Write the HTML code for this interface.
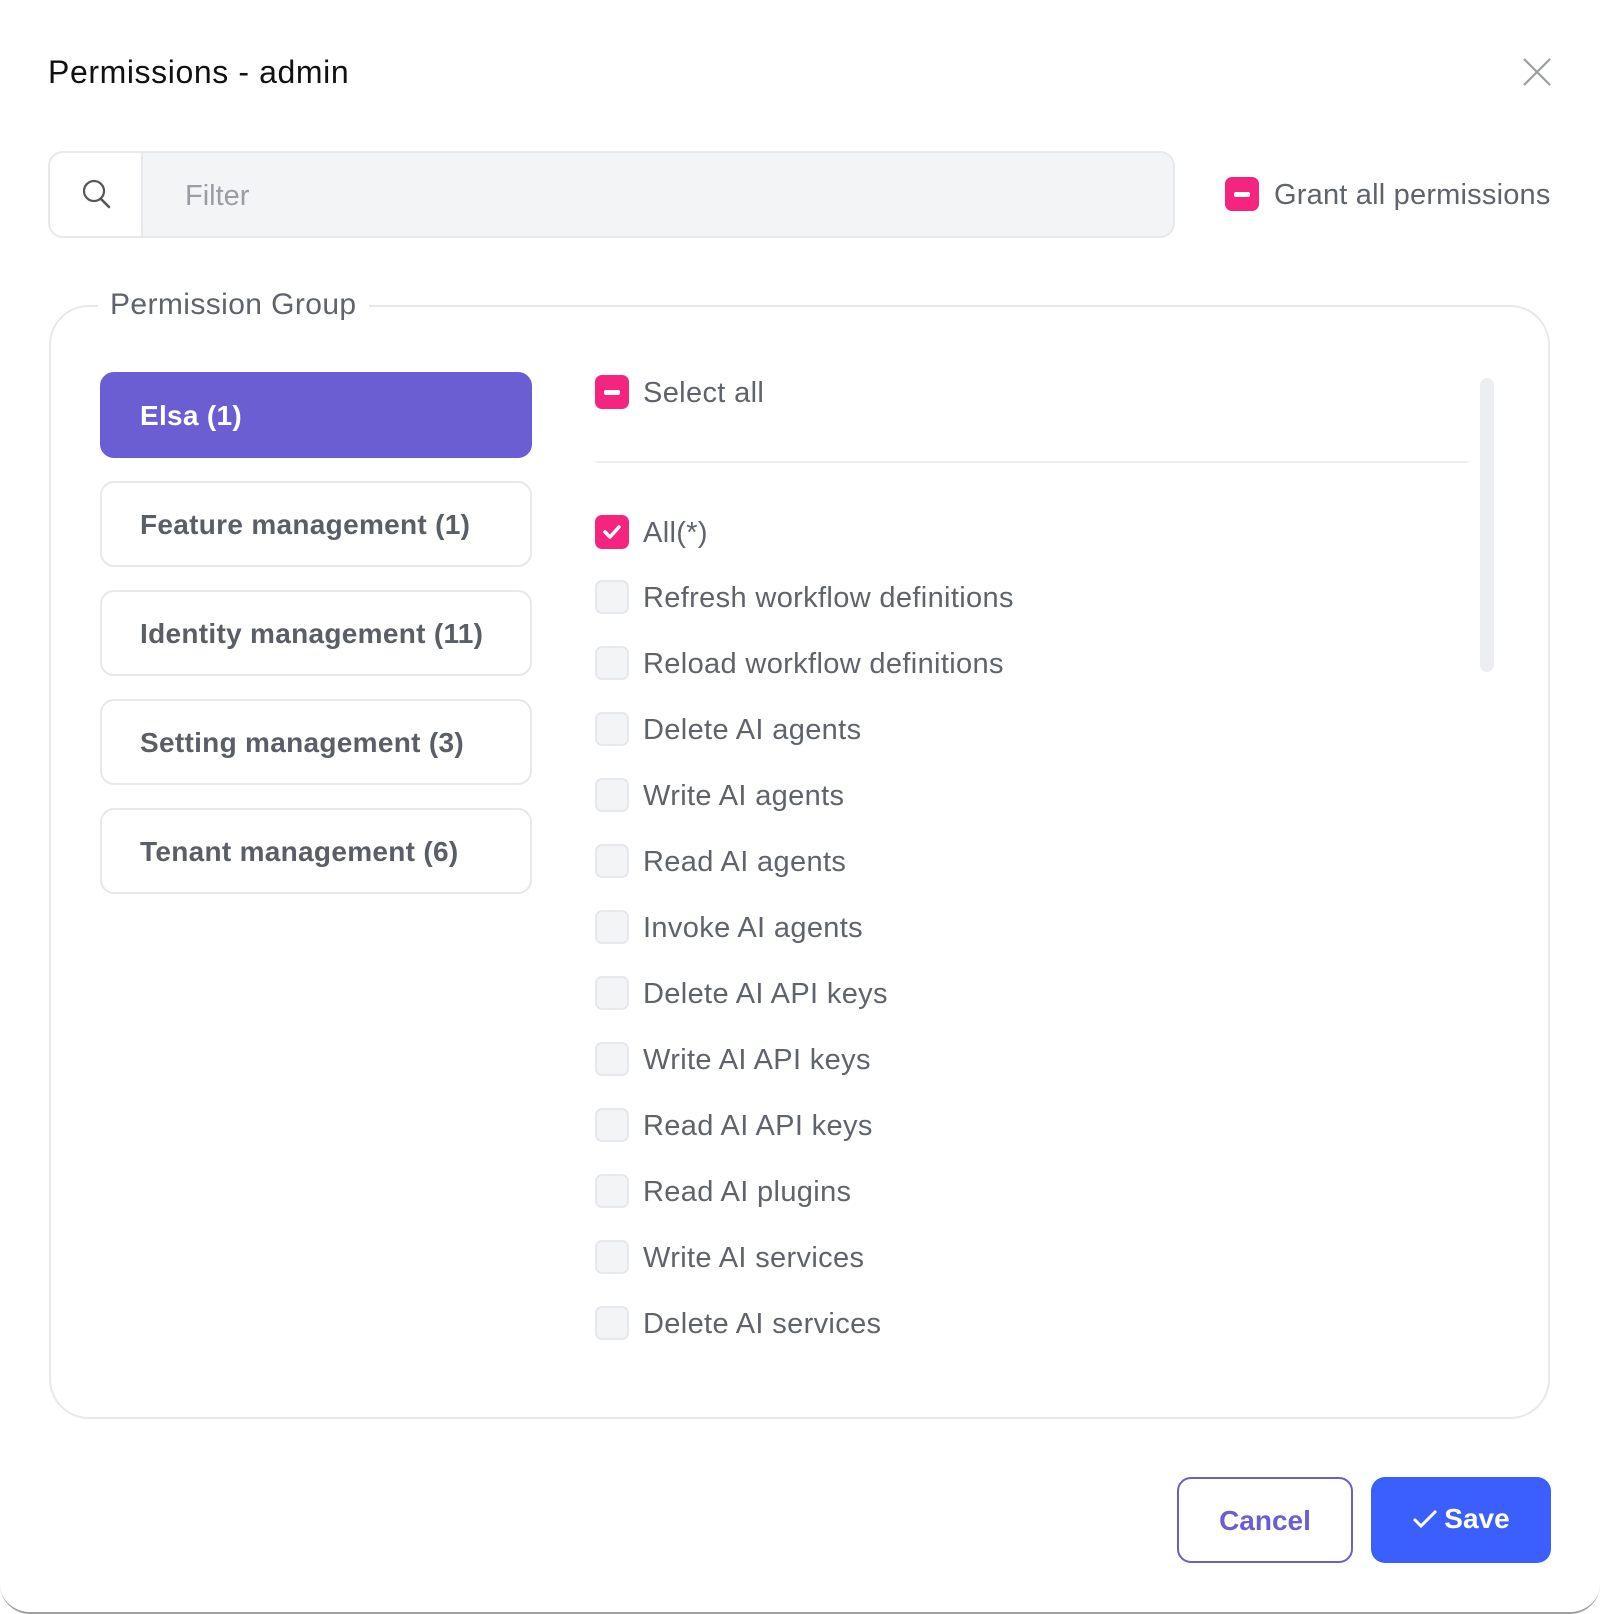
<!DOCTYPE html>
<html><head><style>
*{box-sizing:border-box;margin:0;padding:0}
body{width:1600px;height:1614px;background:#fff;font-family:"Liberation Sans",sans-serif;position:relative;overflow:hidden}
.modal{position:absolute;left:0;top:0;width:1600px;height:1614px;border-radius:30px;background:#fff;border-bottom:2px solid #a0a0a0}
.title{position:absolute;left:48px;top:54px;font-size:32px;color:#111;letter-spacing:0.6px}
.close{position:absolute;left:1522px;top:57px}
.search{position:absolute;left:48px;top:151px;width:1127px;height:87px;border:2px solid #e6e8ec;border-radius:15px;background:#f3f4f6;overflow:hidden}
.search .ic{position:absolute;left:0;top:0;width:93px;height:100%;background:#fff;border-right:2px solid #e6e8ec}
.search .ph{position:absolute;left:135px;top:27px;font-size:29px;color:#9a9da3}
.cb{position:absolute;width:34px;height:34px;border-radius:7px;background:#f3f4f6;border:2px solid #e6e8ec}
.cb.on{background:#f4257f;border-color:#f4257f}
.cb.dash::after{content:"";position:absolute;left:7px;top:13px;width:16px;height:5px;background:#fff;border-radius:2px}
.lbl{position:absolute;font-size:29px;color:#5f636b;white-space:nowrap;letter-spacing:0.35px;margin-top:2px}
.fs{position:absolute;left:49px;top:305px;width:1501px;height:1114px;border:2px solid #e6e8ec;border-radius:40px}
.legend{position:absolute;left:98px;top:288px;background:#fff;padding:0 12px;font-size:30px;color:#5f636b;letter-spacing:0.4px}
.grp{position:absolute;left:100px;width:432px;height:86px;border:2px solid #e6e8ec;border-radius:14px;font-size:28px;font-weight:bold;color:#5a5e66;padding:0 0 0 38px;line-height:84px;letter-spacing:0.3px}
.grp.act{background:#6b5ed3;border-color:#6b5ed3;color:#fff}
.div{position:absolute;left:595px;top:461px;width:874px;height:2px;background:#eceef1}
.sb{position:absolute;left:1480px;top:378px;width:14px;height:294px;border-radius:7px;background:#eceef1}
.btn{position:absolute;top:1477px;height:86px;border-radius:14px;font-size:28px;font-weight:bold;text-align:center;line-height:84px}
</style></head><body><div class="modal">
<div class="title">Permissions - admin</div>
<svg class="close" width="30" height="30" viewBox="0 0 30 30"><path d="M2 2L28 28M28 2L2 28" stroke="#9a9da3" stroke-width="2.2"/></svg>
<div class="search"><div class="ic"><svg style="position:absolute;left:32px;top:26px" width="30" height="32" viewBox="0 0 30 32"><circle cx="12" cy="12" r="10" fill="none" stroke="#555" stroke-width="2.2"/><path d="M19 20L27 28" stroke="#555" stroke-width="2.6" stroke-linecap="round"/></svg></div><div class="ph">Filter</div></div>
<div class="cb on dash" style="left:1225px;top:177px"></div>
<div class="lbl" style="left:1274px;top:177px;letter-spacing:0.2px">Grant all permissions</div>
<div class="fs"></div>
<div class="legend">Permission Group</div>
<div class="grp act" style="top:372px">Elsa (1)</div>
<div class="grp" style="top:481px">Feature management (1)</div>
<div class="grp" style="top:590px">Identity management (11)</div>
<div class="grp" style="top:699px">Setting management (3)</div>
<div class="grp" style="top:808px">Tenant management (6)</div>
<div class="cb on dash" style="left:595px;top:375px"></div>
<div class="lbl" style="left:643px;top:375px">Select all</div>
<div class="div"></div>
<div class="sb"></div>
<div class="cb on" style="left:595px;top:515px"><svg width="30" height="30" viewBox="0 0 30 30" style="position:absolute;left:0;top:0"><path d="M8 15L13 20L22 10" fill="none" stroke="#fff" stroke-width="3.5" stroke-linecap="round" stroke-linejoin="round"/></svg></div>
<div class="lbl" style="left:643px;top:515px">All(*)</div>
<div class="cb" style="left:595px;top:580px"></div><div class="lbl" style="left:643px;top:580px">Refresh workflow definitions</div>
<div class="cb" style="left:595px;top:646px"></div><div class="lbl" style="left:643px;top:646px">Reload workflow definitions</div>
<div class="cb" style="left:595px;top:712px"></div><div class="lbl" style="left:643px;top:712px">Delete AI agents</div>
<div class="cb" style="left:595px;top:778px"></div><div class="lbl" style="left:643px;top:778px">Write AI agents</div>
<div class="cb" style="left:595px;top:844px"></div><div class="lbl" style="left:643px;top:844px">Read AI agents</div>
<div class="cb" style="left:595px;top:910px"></div><div class="lbl" style="left:643px;top:910px">Invoke AI agents</div>
<div class="cb" style="left:595px;top:976px"></div><div class="lbl" style="left:643px;top:976px">Delete AI API keys</div>
<div class="cb" style="left:595px;top:1042px"></div><div class="lbl" style="left:643px;top:1042px">Write AI API keys</div>
<div class="cb" style="left:595px;top:1108px"></div><div class="lbl" style="left:643px;top:1108px">Read AI API keys</div>
<div class="cb" style="left:595px;top:1174px"></div><div class="lbl" style="left:643px;top:1174px">Read AI plugins</div>
<div class="cb" style="left:595px;top:1240px"></div><div class="lbl" style="left:643px;top:1240px">Write AI services</div>
<div class="cb" style="left:595px;top:1306px"></div><div class="lbl" style="left:643px;top:1306px">Delete AI services</div>
<div class="btn" style="left:1177px;width:176px;border:2px solid #6b5ed3;color:#6b5ed3">Cancel</div>
<div class="btn" style="left:1371px;width:180px;background:#3a5ffd;color:#fff"><svg width="26" height="22" viewBox="0 0 26 22" style="vertical-align:-2px;margin-right:6px"><path d="M2 11L9 18L24 3" fill="none" stroke="#fff" stroke-width="3"/></svg>Save</div>
</div></body></html>
